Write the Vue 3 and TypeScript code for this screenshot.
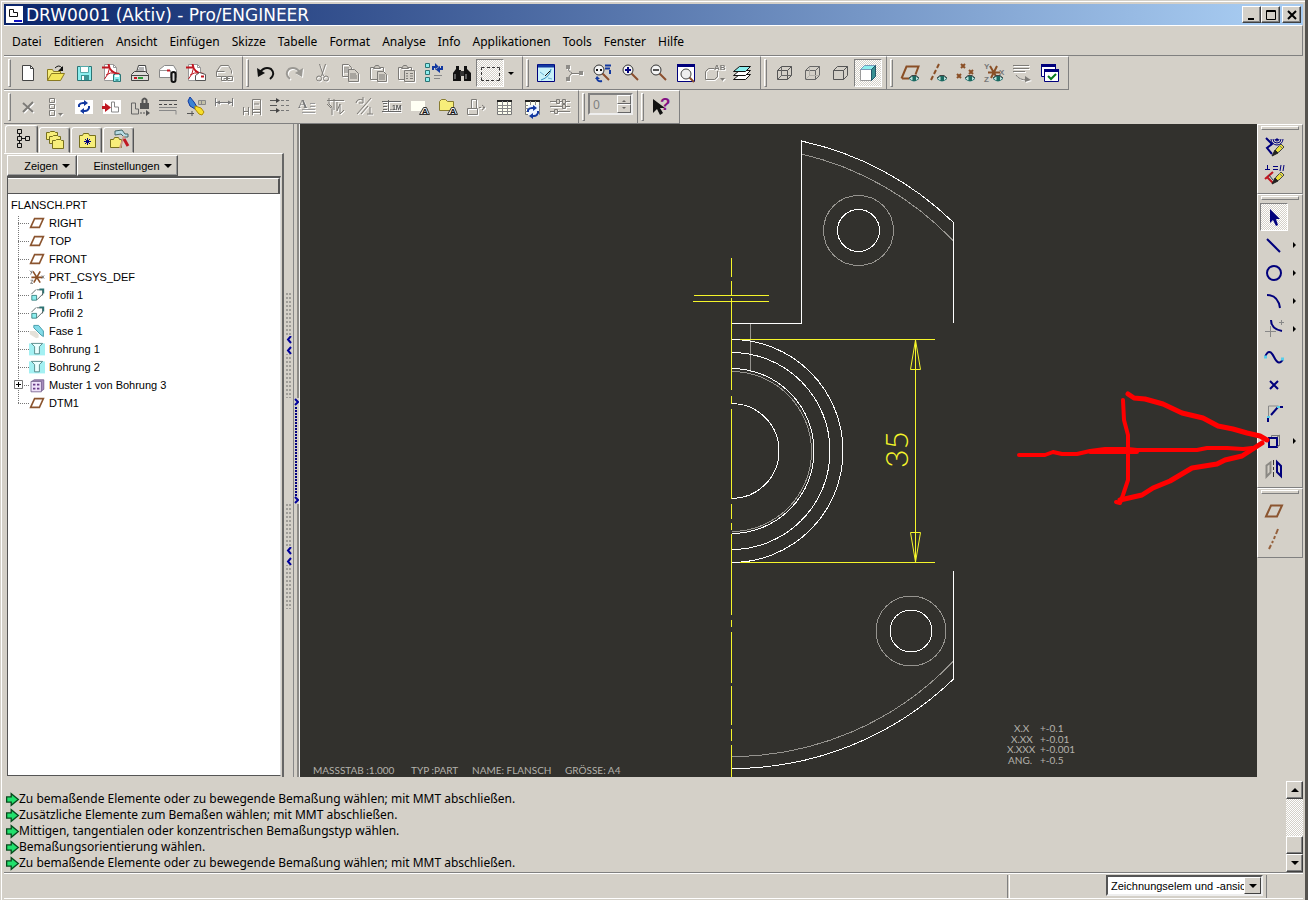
<script setup lang="ts">
import { h, ref } from 'vue'

type Path = [d: string, stroke?: string, fill?: string, width?: number]
type Label = { t: string; x: number; y: number; s: number; c: string; serif?: boolean }
type Shape = Path | Label

const K = '#111'
const G = '#7d7b77'
const W = '#fff'
const N = '#00007c'
const B = '#1238a0'
const R = '#c01822'
const Y = '#f7ee7a'
const C = '#8ceeee'
const T = '#2c7474'
const O = '#8a4f26'

const eye: Shape[] = [
  ['M9 15.5q5-5 10 0q-5 5-10 0z', T, '#bfe3dc'],
  ['M12.5 13h3.5v5h-3.5z', undefined, '#1b6a60'],
  ['M9 15l3-2.5h4l3 2.5', '#444'],
]
const disk: Shape[] = [
  ['M11.5 11.5h7v7h-7z', T, C],
  ['M13 11.5h4v2.5h-4z', undefined, W],
  ['M13.5 16h3v2.5h-3z', undefined, '#4a9c9c'],
]
const pdf: Shape[] = [
  ['M2.5 1.5h9l3 3v13h-12z', '#999', W],
  ['M11.5 1.5v3h3', '#999'],
  ['M0 4.5h7M6.5 1q1 9 11 10', R, 'none', 2],
  ['M7.5 5q-1 7-5 11M4 12q4-3 10-2', R],
]
const envelope: Shape[] = [
  ['M9.5 12.5l4-3 6 2v6h-10z', '#555', W],
  ['M15 13.5h3', R, 'none', 2],
]
const cubeBack = 'M3.5 7.5h10v9h-10zM3.5 7.5l4-4h10v9l-4 4M13.5 7.5l4-4'
const pencil: Shape[] = [
  ['M10 17l2-5 5-5 3 3-5 5z', '#444', '#e8df3a'],
  ['M8 19l3-6 3 3z', '#222', '#222'],
  ['M15 8l3 3', '#777'],
]
const cycle = (x: number, y: number): Shape[] => [
  [`M${x} ${y + 4}v-2q1-2 4-2h2M${x + 10} ${y + 3}v2q-1 3-4 3h-2`, B, 'none', 2],
  [`M${x + 5} ${y - 3}l4 3-4 3zM${x + 5} ${y + 5}l-4 3 4 3z`, undefined, B],
]
const magnifier = (cx: number, cy: number): Shape[] => [
  [`M${cx + 3} ${cy + 3}l7 7`, '#8b4f2e', 'none', 2],
  [`M${cx - 5} ${cy}a5 5 0 1 0 10 0a5 5 0 1 0-10 0`, '#333', '#f4f4f4'],
]
const grid: Shape[] = [
  ['M3.5 3.5h14v14h-14z', '#777', '#fffff0'],
  ['M3 4h15', '#222', 'none', 2],
  ['M3 8.5h15M3 11.5h15M3 14.5h15M8.5 4v14M13.5 4v14', '#888'],
]
const clipboard: Shape[] = [
  ['M2.5 4.5h13v12h-13z', G],
  ['M5.5 5.5l2-3h3l2 3z', G, '#c9c5bd'],
]

const icons: Record<string, Shape[]> = {
  new: [['M4.5 2.5h8l3 3v12h-11z', '#444', W], ['M12.5 2.5v3h3', '#444']],
  open: [
    ['M1.5 17.5v-11h5l1 2h7v3', '#8a7a20', Y],
    ['M1.5 17.5l4-7h13l-4 7z', '#8a7a20', '#f4e65a'],
    ['M9 5q4-4 7 0', K],
    ['M17 3v5h-5z', undefined, K],
  ],
  save: [
    ['M3.5 3.5h14v14h-14z', T, C],
    ['M6.5 3.5h8v6h-8z', '#5aa', W],
    ['M7 12h8v5h-8z', undefined, '#3d9494'],
    ['M8 13h2v4h-2z', undefined, W],
  ],
  pdfsave: [...pdf, ...disk],
  print: [
    ['M6.5 9.5l2-7h7l1 7z', '#444', W],
    ['M9 5h5M8 7h6', '#666'],
    ['M1.5 11.5l3-3h11l3 3v6h-17z', '#444', '#dcdcd8'],
    ['M2 12.5h16', '#444'],
    ['M4 15h3', R, 'none', 2],
    ['M8 15h5', '#2a9a3a', 'none', 2],
  ],
  mail: [
    ['M1.5 6.5l5-4h9l3 5v7h-17z', '#888', W],
    ['M1.5 7.5h11v7', '#999'],
    ['M9 7.5h3', R, 'none', 2],
    ['M13.5 17v-6a2 2 0 0 1 4 0v6a2 2 0 0 1-4 0z', K, '#ddd', 2],
  ],
  pdfmail: [...pdf, ...envelope],
  link: [
    ['M2.5 8.5l4-6h8l3 5v3M2.5 8.5v5h5M2.5 8.5h8', G],
    ['M7.5 13.5h5v4h-5zM13.5 13.5h5v4h-5zM10 15.5h6', G],
  ],
  undo: [['M4 9q5-6 11-3q5 5-1 10', K, 'none', 2], ['M1 5l1 9 7-4z', undefined, K]],
  redo: [['M16 9q-5-6-11-3q-5 5 1 10', '#9a9893', 'none', 2], ['M19 5l-1 9-7-4z', undefined, '#9a9893']],
  cut: [
    ['M7.5 1l4 12M13.5 1l-4 12', G],
    ['M4.5 15.5a2.5 2.5 0 1 0 5 0a2.5 2.5 0 1 0-5 0M11.5 15.5a2.5 2.5 0 1 0 5 0a2.5 2.5 0 1 0-5 0', G],
  ],
  copy: [
    ['M2.5 1.5h6l3 3v9h-9zM4 5h5M4 7h5M4 9h5', G],
    ['M8.5 6.5h6l4 4v8h-10z', G, '#d4d0c8'],
    ['M10 11h6M10 13h7M10 15h7', G],
  ],
  paste: [...clipboard, ['M9.5 8.5h6l3 3v7h-9z', G, '#d4d0c8'], ['M11 12h6M11 14h6M11 16h6', G]],
  pastespecial: [...clipboard, ['M8.5 7.5h10v11h-10z', G, '#d4d0c8'], ['M10 10.5h2M14 10.5h3M10 13h2M14 13h3M10 15.5h2M14 15.5h3', G]],
  regen: [
    ['M1.5.5h4v4h-4zM1.5 7.5h4v4h-4zM1.5 14.5h4v4h-4z', T, C],
    ['M9 7v-3h2M18 3v3h-2', B, 'none', 2],
    ['M11 0l4 4-4 3zM16 3l-5 3 5 4z', undefined, B],
    ['M10 12.5h8M10 15.5h6', '#888'],
  ],
  find: [
    ['M4 3h3v4h2v11h-8v-8l3-4zM12 3h3v3l4 4v8h-7v-11z', undefined, K],
    ['M8 8h4v5h-4z', undefined, '#333'],
    ['M3 11v5M14 11v5', '#aaa'],
  ],
  select: [['M1.5 7v-2.5h3M7 4.5h3M12 4.5h3M17 4.5h2.5v3M19.5 10v3M19.5 15v2.5h-3M14 17.5h-3M9 17.5h-3M4 17.5h-2.5v-3M1.5 12v-3', '#333']],
  repaint: [
    ['M1.5 1.5h17v17h-17z', N, '#c8f2fa'],
    ['M2 3h16', B, 'none', 3],
    ['M5 17q9-3 10-11', '#3b8dbb'],
    ['M4 9l4 3M12 15l4 1', '#6cb0d0'],
    ['M9 13l5-5', K],
  ],
  spin: [
    ['M4 4q0 5 4 6q-3 2-4 7M8 10.5h9', G],
    ['M2 2h4v4h-4zM2 14h4v4h-4zM15 8h4v4h-4z', undefined, '#8e8c88'],
  ],
  orient: [
    ...magnifier(7, 7),
    ['M13 2.5h6M13 5.5h5M18 7v4M5 15q0 4 5 3', B, 'none', 2],
    ['M4 7h2M8 7h2', K, 'none', 2],
    ['M3 16l2-3 3 3z', undefined, B],
  ],
  zoomin: [...magnifier(8, 7), ['M5 7h6M8 4v6', N, 'none', 2]],
  zoomout: [...magnifier(8, 7), ['M5 7h6', '#555', 'none', 2]],
  refit: [
    ['M1.5 1.5h17v17h-17z', N, W],
    ['M1 2.5h18', N, 'none', 3],
    ['M13 14l5 5', '#8b4f2e', 'none', 2],
    ['M5 11a5 5 0 1 0 10 0a5 5 0 1 0-10 0', '#444', '#eee'],
  ],
  views: [
    ['M1.5 16.5v-8l3-3h6M1.5 16.5h9l3-3v-5', G],
    { t: 'AB', x: 10, y: 7, s: 8, c: '#7d7b77' },
    ['M13.5 8v6', G],
    ['M16 15h5l-2.5 3z', undefined, G],
  ],
  layers: [
    ['M1.5 16.5l6-5h11l-5 5z', K, W],
    ['M1.5 12.5l6-5h11l-5 5z', K, W],
    ['M1.5 8.5l6-5h11l-5 5z', K, C],
  ],
  wire: [[cubeBack, '#555'], ['M3.5 16.5l4-4h10M7.5 4v9', '#666']],
  hidden: [[cubeBack, '#666'], ['M3.5 16.5l4-4h10M7.5 4v9', '#b1aea8']],
  nohidden: [[cubeBack, '#555']],
  shaded: [
    ['M2.5 6.5h11v11h-11z', '#999', W],
    ['M2.5 6.5l4-4h11l-4 4z', '#79b', C],
    ['M13.5 6.5l4-4v11l-4 4z', '#256', '#378f91'],
  ],
  planes: [['M1.5 15.5l5-12h12l-3 8M2 15.5h7', O, 'none', 2], ...eye],
  axes: [['M11 1l-2 4M8 7l-2 4M5 13l-2 4', O, 'none', 2], ...eye],
  points: [
    ['M5 1l4 4M9 1l-4 4M13 7l4 4M17 7l-4 4M1 11l4 4M5 11l-4 4', O, 'none', 2],
    ...eye,
  ],
  csys: [
    ['M6 3l7 12M13 3l-6 12M4 9.5h12', O, 'none', 2],
    { t: 'Y', x: 0, y: 6, s: 8, c: '#777' },
    { t: 'Z', x: 0, y: 19, s: 8, c: '#777' },
    { t: 'X', x: 15, y: 12, s: 8, c: '#777' },
    ...eye,
  ],
  notes: [['M1 2.5h16M1 5.5h16M1 8.5h12', G], ['M4 12q3 5 11 5', G], ['M13 13l6 4-6 2z', undefined, G]],
  windows: [
    ['M1.5 1.5h14v12h-14z', N, W],
    ['M1 2.5h15', N, 'none', 3],
    ['M4.5 7.5h14v11h-14z', N, W],
    ['M4 7.5h15', N, 'none', 3],
    ['M8 13l3 3 5-5', '#087a20', 'none', 2],
  ],
  close: [['M5 6l10 9M15 5l-10 10', G, 'none', 2]],
  chain: [['M3.5 1.5h5v4h-5zM3.5 7.5h5v4h-5zM3.5 13.5h5v5h-5z', G], ['M12 16h5l-2.5 3z', undefined, G]],
  update: [['M1 3h18v14h-18z', undefined, W], ...cycle(5, 6)],
  insert: [['M1 3h18v14h-18z', undefined, W], ['M9.5 5v10h7v-5h-4v-5z', '#888'], ['M0 10.5h4', R, 'none', 3], ['M3 6l6 4.5-6 4.5z', undefined, R]],
  lock: [
    ['M1.5 6v11h7v-5h-3v-6z', '#666'],
    ['M10 6h9v6h-9z', undefined, '#555'],
    ['M12.5 6v-3q2-3 4 0v3', '#555', 'none', 2],
    ['M10 16h2M13 16h2', '#555'],
    ['M16 13l4 3-4 3z', undefined, '#555'],
  ],
  lines: [['M1 3.5h18', '#555'], ['M1 7.5h3M6 7.5h3M11 7.5h3M16 7.5h3', '#444'], ['M1 10.5h18M1 13.5h9', '#888'], ['M10 13.5h8v4', '#888']],
  highlight: [
    ['M12.5 3.5h7v4h-7zM15.5 4v3', '#888', '#c4c1a8'],
    ['M4 0l-2 4 2 5 5 3 2-2-3-5z', B, '#3b83d2'],
    ['M9 9l6 2 3 4-2 3-3-1-4-5z', '#b08b00', '#f7df2c'],
    ['M1 16.5h7M6 14v5', '#555'],
  ],
  dim: [['M1.5 1v8M18.5 1v8M2 5.5h16', '#777'], ['M2 5.5l4-2v4zM18 5.5l-4-2v4z', undefined, '#777']],
  ordinate: [['M1.5 10v8M1 14.5h6M6.5 10v8M10.5 2.5h8v10h-8zM10.5 12v6M18.5 12v6M10 15.5h9M12 7h5', G]],
  align: [['M0 3.5h7M0 8.5h7M0 13.5h7', '#555'], ['M6 1l4 2.5-4 2.5zM6 11l4 2.5-4 2.5z', undefined, '#444'], ['M11 3.5h3M16 3.5h3M11 8.5h3M16 8.5h3M11 13.5h3M16 13.5h3', '#777']],
  note: [{ t: 'A', x: 0, y: 11, s: 13, c: '#777', serif: true }, ['M12 6.5h5M12 9.5h5M4 12.5h13M4 15.5h13', '#999']],
  symbol: [['M1 3.5h17M3 1v6l3 3v8M8 2v11M11 5v9l3-7v10l4-4M1 7l4 4', G]],
  surface: [['M2 6q1-5 7-3M9 0v6h-4M17 1l-14 16M14 9l-7 8M13 17h6M16 10v7', G]],
  gtol: [['M1 6.5h4M1 9.5h4M1 12.5h4M6.5 3v12M0 4.5h19M0 14.5h19', '#666'], { t: '.1M', x: 8, y: 13, s: 7, c: '#555' }],
  draftnote: [['M1 4h14v10h-14z', undefined, '#fffff4'], ['M9.5 17.5l4-7h3l3 7z', '#333', '#eee'], { t: 'A', x: 12, y: 17, s: 8, c: '#111' }],
  foldernote: [['M1.5 4.5l2-2h4l2 2h6v9h-14z', '#887c30', Y], ['M9.5 17.5l4-7h3l3 7z', '#333', '#eee'], { t: 'A', x: 12, y: 17, s: 8, c: '#111' }],
  section: [['M1.5 11.5h10v6h-10zM5.5 2.5h5v9h-5zM13 10.5h2M17 10.5h2M16 8l3 2.5-3 2.5', G]],
  table: grid,
  tableupdate: [...grid, ['M6 8h11v10h-11z', undefined, '#eef5ff'], ...cycle(6, 11)],
  balloons: [['M0 4.5h20M0 9.5h20M0 14.5h20', G], ['M6.5 2.5h3v4h-3zM12.5 7.5h3v4h-3zM4.5 12.5h3v4h-3zM12.5 2.5h3v4h-3z', G, '#d4d0c8']],
  help: [['M2 2v14l4-4 3 6 3-2-3-5h5z', undefined, K], { t: '?', x: 9, y: 13, s: 17, c: '#831083' }],
  sketchprefs: [
    ['M2 1l6 6-5 4 5 6', N, 'none', 2],
    ['M7 2a6 6 0 0 0 12 0M9 2a4 4 0 0 0 8 0M11 2a2 2 0 0 0 4 0', N],
    ['M13 1v3M11.5 2.5h3', N],
    ...pencil,
  ],
  constraints: [
    ['M1 4.5h5M3.5 0v5M9 1.5h5M9 4.5h5M17 0l-1 6M20 0l-1 6', N],
    ['M1 14l8-7M3 12l6 6', R, 'none', 2],
    ['M5 10l4 5', '#245'],
    ...pencil,
  ],
  pointer: [['M6 2v14l3-3 3 6 2-1-2-6h4z', undefined, N]],
  line: [['M3 4l13 13', N, 'none', 2]],
  circle: [['M3 10a7 7 0 1 0 14 0a7 7 0 1 0-14 0', N, 'none', 2]],
  arc: [['M3 4q11 0 13 13', N, 'none', 2]],
  fillet: [['M7 1q0 9 11 11', N, 'none', 2], ['M1 12.5h11M6.5 7v11M15 3.5h5M17.5 1v5', '#888']],
  spline: [['M1 10q4-10 9 0t9 2', N, 'none', 2], ['M0 10h3M17 12h3', '#58cdea', 'none', 3]],
  point: [['M6 6l8 8M14 6l-8 8', N, 'none', 2]],
  chamfer: [['M4.5 15v-12h10', '#888'], ['M4 19v-5M7 12l7-8h5', N, 'none', 2], ['M3 14h3M13 4h3', '#58cdea', 'none', 2]],
  edge: [['M7.5 7v-2.5h8v10h-3', '#777'], ['M5 7h8v9h-8z', N, 'none', 2], ['M13 6l3-2M13 16l3-2', '#777']],
  mirror: [['M2.5 6.5l4-3v10l-4 4z', '#8b8984', 'none', 2], ['M9.5 1v5M9.5 8v3M9.5 13v5', '#333'], ['M13 3l4 4v10l-4-4z', N, 'none', 2]],
  plane: [['M2 15.5l5-11h11l-5 11z', '#8b5530', 'none', 2]],
  axis: [['M14 0l-2 5M11 7l-1 3M9 12l-1 2M7 16l-2 4', '#95603c', 'none', 2]],
  treetab: [['M5.5.5h4v4h-4zM5.5 7.5h4v4h-4zM5.5 14.5h4v4h-4zM13.5 7.5h4v4h-4zM7.5 5v2M10 9.5h3M7.5 12v2', K]],
  folders: [
    ['M1.5 9.5v-7h3l1-1h4l1 1h2v7z', '#77701c', Y],
    ['M4.5 13.5v-7h3l1-1h4l1 1h2v7z', '#77701c', Y],
    ['M7.5 18.5v-8h3l1-1h4l1 1h2v8z', '#77701c', Y],
  ],
  favorites: [['M2.5 17.5v-12h3l1-2h5l1 2h6v12z', '#77701c', Y], ['M10.5 8v7M7 11.5h7M8 9l5 5M13 9l-5 5', N]],
  connections: [
    ['M1.5 17.5v-8h3l1-2h4l1 2h2v8z', '#77701c', Y],
    ['M6 1l7-1 3 4h3v3h-4l-3-3-6 1z', '#466', '#b7dbe4'],
    ['M15 6l-4 12', '#c98', 'none', 2],
    ['M15 9l4 7', R, 'none', 3],
  ],
  csysnode: [['M5 3l9 14M14 3l-8 14M3 10.5h14', O, 'none', 2], ['M1 2l3 3M4 2l-2 5M16 8l3 4M19 8l-3 4M2 14h3l-3 4h3', '#666']],
  extrude: [['M3.5 10.5h6v6h-6z', T, C], ['M3 9l6-6M10 16l7-7', '#344'], ['M10 3.5h7v7', '#344'], ['M13 3h5v5', T, 'none', 2]],
  chamfernode: [['M1 10h7l4 4v4l-3 1-8-5z', undefined, '#e4e1d9'], ['M6 3h6l6 7v7l-3-2-9-9z', '#2c8c9c', '#84dbe8']],
  hole: [['M0 3h20v15h-20z', undefined, '#a3f0f2'], ['M3 3l4 4v9h6v-9l4-4z', '#477', '#ecffff']],
  pattern: [['M3.5 5.5l3-2h12v12l-3 2z', '#6d5986', '#a78cbc'], ['M2.5 5.5h13v13h-13z', '#6d5986', '#efe2fa'], ['M5 9.5h3M10 9.5h3M5 14.5h3M10 14.5h3', '#6a3c88', 'none', 2]],
  arrow: [['M1 6h7v-5l11 9-11 9v-5h-7z', '#064a1c', '#22e06c', 2]],
}

const Icon = (props: { name: string }) =>
  h(
    'svg',
    { viewBox: '0 0 20 20', width: 20, height: 20, class: 'icon', 'aria-hidden': 'true' },
    (icons[props.name] ?? []).map((s) =>
      Array.isArray(s)
        ? h('path', { d: s[0], stroke: s[1] ?? 'none', fill: s[2] ?? 'none', 'stroke-width': s[3] ?? 1 })
        : h('text', { x: s.x, y: s.y, fill: s.c, 'font-size': s.s, 'font-weight': 'bold', 'font-family': s.serif ? 'Liberation Serif, serif' : 'Liberation Sans, sans-serif' }, s.t),
    ),
  )
Icon.props = ['name']

interface Tool { icon: string; label: string; disabled?: boolean; pressed?: boolean; more?: boolean }
const t = (icon: string, label: string, flags = ''): Tool => ({
  icon,
  label,
  disabled: flags.includes('d'),
  pressed: flags.includes('p'),
  more: flags.includes('m'),
})

const menus = ['Datei', 'Editieren', 'Ansicht', 'Einfügen', 'Skizze', 'Tabelle', 'Format', 'Analyse', 'Info', 'Applikationen', 'Tools', 'Fenster', 'Hilfe']

const topBar: Tool[][] = [
  [t('new', 'Neu'), t('open', 'Öffnen'), t('save', 'Speichern'), t('pdfsave', 'PDF speichern'), t('print', 'Drucken'), t('mail', 'Senden'), t('pdfmail', 'PDF senden'), t('link', 'Verknüpfung senden', 'd')],
  [t('undo', 'Rückgängig'), t('redo', 'Wiederherstellen', 'd'), t('cut', 'Ausschneiden', 'd'), t('copy', 'Kopieren', 'd'), t('paste', 'Einfügen', 'd'), t('pastespecial', 'Inhalte einfügen', 'd'), t('regen', 'Regenerieren'), t('find', 'Suchen'), t('select', 'Auswahl', 'pm')],
  [t('repaint', 'Neuzeichnen'), t('spin', 'Drehzentrum', 'd'), t('orient', 'Orientieren'), t('zoomin', 'Vergrößern'), t('zoomout', 'Verkleinern'), t('refit', 'Einpassen'), t('views', 'Ansichten', 'd'), t('layers', 'Layer')],
  [t('wire', 'Drahtmodell'), t('hidden', 'Verdeckte Kanten'), t('nohidden', 'Sichtbare Kanten'), t('shaded', 'Schattiert', 'p')],
  [t('planes', 'Bezugsebenen'), t('axes', 'Bezugsachsen'), t('points', 'Bezugspunkte'), t('csys', 'Koordinatensysteme'), t('notes', 'Anmerkungen', 'd'), t('windows', 'Fenster aktivieren')],
]

const draftBar: Tool[] = [
  t('close', 'Schließen', 'd'), t('chain', 'Kette', 'd'), t('update', 'Aktualisieren'), t('insert', 'Ansicht einfügen'), t('lock', 'Ansicht sperren'),
  t('lines', 'Linien'), t('highlight', 'Hervorheben'), t('dim', 'Bemaßung', 'd'), t('ordinate', 'Ordinate', 'd'), t('align', 'Ausrichten'),
  t('note', 'Notiz', 'd'), t('symbol', 'Symbol', 'd'), t('surface', 'Oberfläche', 'd'), t('gtol', 'Toleranz', 'd'), t('draftnote', 'Zeichnungsnotiz'),
  t('foldernote', 'Notiz aus Datei'), t('section', 'Schnitt', 'd'), t('table', 'Tabelle'), t('tableupdate', 'Tabelle aktualisieren'), t('balloons', 'Stücklistenballons', 'd'),
]

const sideBar: Tool[][] = [
  [t('sketchprefs', 'Skizziervorgaben'), t('constraints', 'Bedingungen')],
  [t('pointer', 'Auswählen', 'p'), t('line', 'Linie', 'm'), t('circle', 'Kreis', 'm'), t('arc', 'Bogen', 'm'), t('fillet', 'Rundung', 'm'), t('spline', 'Spline'), t('point', 'Punkt'), t('chamfer', 'Fase'), t('edge', 'Kante verwenden', 'm'), t('mirror', 'Spiegeln')],
  [t('plane', 'Ebene'), t('axis', 'Achse')],
]

const tabs = [t('treetab', 'Modellbaum', 'p'), t('folders', 'Ordner'), t('favorites', 'Favoriten'), t('connections', 'Verbindungen')]

const nodes = [
  { icon: 'plane', name: 'RIGHT' },
  { icon: 'plane', name: 'TOP' },
  { icon: 'plane', name: 'FRONT' },
  { icon: 'csysnode', name: 'PRT_CSYS_DEF' },
  { icon: 'extrude', name: 'Profil 1' },
  { icon: 'extrude', name: 'Profil 2' },
  { icon: 'chamfernode', name: 'Fase 1' },
  { icon: 'hole', name: 'Bohrung 1' },
  { icon: 'hole', name: 'Bohrung 2' },
  { icon: 'pattern', name: 'Muster 1 von Bohrung 3', branch: true },
  { icon: 'plane', name: 'DTM1' },
]

const messages = [
  'Zu bemaßende Elemente oder zu bewegende Bemaßung wählen; mit MMT abschließen.',
  'Zusätzliche Elemente zum Bemaßen wählen; mit MMT abschließen.',
  'Mittigen, tangentialen oder konzentrischen Bemaßungstyp wählen.',
  'Bemaßungsorientierung wählen.',
  'Zu bemaßende Elemente oder zu bewegende Bemaßung wählen; mit MMT abschließen.',
]

const tolerances = [
  { label: 'X.X', x: 1014, value: '+-0.1', y: 732 },
  { label: 'X.XX', x: 1011, value: '+-0.01', y: 743 },
  { label: 'X.XXX', x: 1007, value: '+-0.001', y: 753 },
  { label: 'ANG.', x: 1008, value: '+-0.5', y: 764 },
]

// Start and end of each dash of the vertical centre line.
const centreDashes = [
  [258, 277], [281, 295], [298, 390], [396, 404], [409, 499], [504, 519], [523, 530],
  [534, 615], [620, 627], [632, 683], [686, 725], [729, 741], [745, 777],
]

const count = ref(0)
const filter = ref('Zeichnungselem und -ansic')
</script>

<template>
  <div class="window">
    <header class="titlebar">
      <svg class="logo" viewBox="0 0 17 17" width="17" height="17" aria-hidden="true">
        <path d="M0 0h17v17h-17z" fill="#fff" />
        <path d="M3.5 3.5v7h8v-4h-4v-3z" fill="none" stroke="#111" />
        <path d="M8 15h8" stroke="#1010c0" stroke-width="2" />
      </svg>
      <h1>DRW0001 (Aktiv) - Pro/ENGINEER</h1>
      <div class="caption">
        <button aria-label="Minimieren"><svg viewBox="0 0 12 12" width="12" height="12"><path d="M2 10h6" stroke="#000" stroke-width="2" /></svg></button>
        <button aria-label="Maximieren"><svg viewBox="0 0 12 12" width="12" height="12"><path d="M1.5 1.5h9v9h-9zM1 2.5h10" fill="none" stroke="#000" /></svg></button>
        <button class="quit" aria-label="Schließen"><svg viewBox="0 0 12 12" width="12" height="12"><path d="M2 2l8 8M10 2l-8 8" stroke="#000" stroke-width="2" /></svg></button>
      </div>
    </header>

    <nav class="menubar">
      <button v-for="m in menus" :key="m">{{ m }}</button>
    </nav>

    <div class="toolbar">
      <div v-for="(group, i) in topBar" :key="i" class="group">
        <span class="grip"></span>
        <template v-for="b in group" :key="b.icon">
          <button class="tool" :class="{ disabled: b.disabled, pressed: b.pressed }" :aria-label="b.label"><Icon :name="b.icon" /></button>
          <button v-if="b.more" class="drop" aria-label="Weitere Auswahl"><span class="down"></span></button>
        </template>
      </div>
    </div>

    <div class="toolbar">
      <div class="group">
        <span class="grip"></span>
        <button v-for="b in draftBar" :key="b.icon" class="tool" :class="{ disabled: b.disabled }" :aria-label="b.label"><Icon :name="b.icon" /></button>
      </div>
      <div class="group">
        <span class="grip"></span>
        <div class="spinner">
          <input v-model="count" type="text" aria-label="Anzahl" disabled />
          <div class="steps">
            <button aria-label="Erhöhen"><span class="up"></span></button>
            <button aria-label="Verringern"><span class="down"></span></button>
          </div>
        </div>
      </div>
      <div class="group">
        <span class="grip"></span>
        <button class="tool" aria-label="Kontexthilfe"><Icon name="help" /></button>
      </div>
    </div>

    <main class="work">
      <aside class="navigator">
        <div class="tabs">
          <button v-for="b in tabs" :key="b.icon" :class="{ current: b.pressed }" :aria-label="b.label"><Icon :name="b.icon" /></button>
        </div>
        <div class="pane">
          <div class="actions">
            <button class="show">Zeigen <span class="down big"></span></button>
            <button class="settings">Einstellungen <span class="down big"></span></button>
          </div>
          <div class="tree">
            <div class="treehead"></div>
            <p class="root">FLANSCH.PRT</p>
            <ul>
              <li v-for="n in nodes" :key="n.name">
                <button v-if="n.branch" class="expand" aria-label="Aufklappen"><svg viewBox="0 0 9 9" width="9" height="9"><path d="M.5.5h8v8h-8z" fill="#fff" stroke="#777" /><path d="M2 4.5h5M4.5 2v5" stroke="#000" /></svg></button>
                <Icon :name="n.icon" class="small" />
                <span>{{ n.name }}</span>
              </li>
            </ul>
          </div>
        </div>
      </aside>

      <div class="splitter">
        <div class="rail">
          <template v-for="k in 2" :key="k">
            <div class="knob"><svg viewBox="0 0 6 18" width="6" height="18" aria-hidden="true"><path d="M0 0h6v18h-6z" fill="#d4d0c8" /><path d="M5 0l-3 3.5 3 3.5M5 11l-3 3.5 3 3.5" fill="none" stroke="#00009c" stroke-width="2" /></svg></div>
          </template>
        </div>
        <div class="edge">
          <div class="slot">
            <svg viewBox="0 0 5 8" width="5" height="8" aria-hidden="true"><path d="M0 0h5v8h-5z" fill="#d4d0c8" /><path d="M1 1l3 3-3 3" fill="none" stroke="#00009c" stroke-width="2" /></svg>
            <svg viewBox="0 0 5 8" width="5" height="8" aria-hidden="true"><path d="M0 0h5v8h-5z" fill="#d4d0c8" /><path d="M1 1l3 3-3 3" fill="none" stroke="#00009c" stroke-width="2" /></svg>
          </div>
        </div>
      </div>

      <section class="canvas" aria-label="Zeichnung">
        <svg viewBox="300 124 957 653" preserveAspectRatio="xMidYMax meet">
          <g fill="none" stroke="#96948f" shape-rendering="crispEdges">
            <path d="M801.5 154A305 305 0 0 1 953.5 241M953.5 661A305 305 0 0 1 731.5 756.5M750.5 323v49" />
            <path d="M731.5 371.5a80 80 0 0 1 0 160" />
            <circle cx="858.5" cy="230.5" r="35" />
            <circle cx="911" cy="631" r="35" />
          </g>
          <g fill="none" stroke="#fff" shape-rendering="crispEdges">
            <path d="M731 323.5h70.5V141A318 318 0 0 1 953.5 222.5V323M953.5 571v108A318 318 0 0 1 731.5 768.5" />
            <path d="M731.5 339.5a111 111 0 0 1 0 223M731.5 352.5a98 98 0 0 1 0 197M731.5 368.5a82 82 0 0 1 0 165M731.5 403.5a47 47 0 0 1 0 95" />
            <circle cx="858.5" cy="230.5" r="21" />
            <circle cx="911" cy="631" r="21" />
          </g>
          <g fill="#f5f52a">
            <rect v-for="d in centreDashes" :key="d[0]" x="731" :y="d[0]" width="1" :height="d[1] - d[0]" />
            <rect x="694" y="295" width="75" height="1" />
            <rect x="693" y="301" width="76" height="1" />
            <rect x="740" y="339" width="195" height="1" />
            <rect x="740" y="562" width="195" height="1" />
            <rect x="915" y="340" width="1" height="222" />
          </g>
          <path d="M915.5 340l-5 29.5h10zM915.5 562l-5-29.5h10z" fill="none" stroke="#f5f52a" />
          <text class="measure" transform="translate(908 468) rotate(-90)">35</text>
          <g class="plot">
            <text x="313" y="774">MASSSTAB :1.000</text>
            <text x="411" y="774">TYP :PART</text>
            <text x="472" y="774">NAME: FLANSCH</text>
            <text x="565" y="774">GRÖSSE: A4</text>
            <template v-for="r in tolerances" :key="r.label">
              <text :x="r.x" :y="r.y">{{ r.label }}</text>
              <text x="1040" :y="r.y">{{ r.value }}</text>
            </template>
          </g>
        </svg>
      </section>

      <div class="sidebar">
        <div v-for="(group, i) in sideBar" :key="i" class="sidegroup">
          <span class="hgrip"></span>
          <div v-for="b in group" :key="b.icon" class="siderow">
            <button class="tool" :class="{ pressed: b.pressed }" :aria-label="b.label"><Icon :name="b.icon" /></button>
            <button v-if="b.more" class="flyout" aria-label="Weitere Werkzeuge"><span class="right"></span></button>
          </div>
        </div>
      </div>

      <svg class="pointerline" viewBox="1011 388 292 120" width="292" height="120" aria-hidden="true">
        <g fill="none" stroke="#f00" stroke-linecap="round" stroke-linejoin="round">
          <path stroke-width="4" d="M1019 455H1045L1053 452L1062 454H1077L1090 451L1105 449H1128L1137 450H1197L1207 448H1227L1243 449L1252 448M1090 452H1137" />
          <path stroke-width="5" d="M1128 394L1134 398L1145 399L1163 404L1182 413L1203 418L1218 426L1233 429L1247 433L1260 436L1267 440" />
          <path stroke-width="4" d="M1123 400L1124 420L1128 435V480L1123 495L1120 503L1116 502" />
          <path stroke-width="5" d="M1120 500L1142 495L1153 488L1170 481L1192 468L1217 464L1225 460L1242 456L1262 443" />
        </g>
      </svg>
    </main>

    <section class="log">
      <ul>
        <li v-for="(m, i) in messages" :key="i"><Icon name="arrow" class="bullet" /><span>{{ m }}</span></li>
      </ul>
      <div class="scroll">
        <button aria-label="Nach oben"><span class="up big"></span></button>
        <div class="track"></div>
        <div class="thumb"></div>
        <button aria-label="Nach unten"><span class="down big"></span></button>
      </div>
    </section>

    <footer class="status">
      <div class="hint"></div>
      <div class="filter">
        <select v-model="filter" aria-label="Auswahlfilter"><option>Zeichnungselem und -ansic</option></select>
        <span class="selarrow"><span class="down big"></span></span>
      </div>
      <div class="corner"></div>
    </footer>
  </div>
</template>

<style>
body { margin: 0; background: #d4d0c8; }
</style>

<style scoped>
* { box-sizing: border-box; }
.window {
  height: 100vh;
  min-height: 600px;
  display: flex;
  flex-direction: column;
  padding: 4px 2px 1px 4px;
  background: #d4d0c8;
  border-right: 3px solid #55534f;
  box-shadow: inset 1px 1px 0 #d4d0c8, inset 2px 2px 0 #fff;
  color: #000;
  font: 12px/16px "Noto Sans", sans-serif;
  overflow: hidden;
}
button { padding: 0; margin: 0; border: 0; background: none; color: inherit; font: inherit; display: flex; align-items: center; justify-content: center; }
ul { list-style: none; margin: 0; padding: 0; }
.icon { display: block; overflow: visible; flex: none; }

.titlebar { flex: none; height: 21px; display: flex; align-items: center; padding: 0 2px; background: linear-gradient(90deg, #0a246a, #a6caf0 96%); }
.logo { margin-right: 3px; }
.titlebar h1 { flex: 1; margin: 0; padding-top: 1px; color: #fff; font: 17px/20px "DejaVu Sans", sans-serif; white-space: nowrap; }
.caption { display: flex; }
.caption button { width: 19px; height: 17px; background: #d4d0c8; border: 1px solid; border-color: #fff #404040 #404040 #fff; box-shadow: inset -1px -1px 0 #808080; }
.caption .quit { margin-left: 2px; }

.menubar { flex: none; display: flex; gap: 12px; height: 31px; padding: 3px 8px 0; border-top: 1px solid #fff; border-right: 1px solid #808080; border-bottom: 1px solid #808080; }

.toolbar { flex: none; display: flex; height: 34px; }
.group { display: flex; align-items: center; padding: 0 4px 0 3px; border-top: 1px solid #fff; border-right: 1px solid #808080; border-bottom: 1px solid #808080; }
.group:first-child { padding-left: 4px; }
.grip { width: 3px; height: 28px; margin-right: 3px; border: 1px solid; border-color: #fff #808080 #808080 #fff; }
.tool { flex: none; width: 28px; height: 28px; }
.disabled .icon { filter: drop-shadow(1px 1px 0 #fff); }
.pressed { border: 1px solid; border-color: #808080 #fff #fff #808080; background: repeating-conic-gradient(#fff 0 25%, #d4d0c8 0 50%) 0 0 / 2px 2px; }
.drop { width: 14px; height: 28px; }
.down, .up, .right { display: inline-block; width: 0; height: 0; border: 3px solid transparent; }
.down { border-top-color: #000; border-bottom-width: 0; }
.up { border-bottom-color: #000; border-top-width: 0; }
.right { border-left-color: #000; border-right-width: 0; }
.big { border-left-width: 4px; border-right-width: 4px; }
.down.big { border-top-width: 4px; }
.up.big { border-bottom-width: 4px; }

.spinner { display: flex; width: 45px; height: 22px; margin-bottom: 6px; border: 2px solid; border-color: #808080 #eee #eee #808080; }
.spinner input { flex: 1; min-width: 0; padding: 0 3px; border: 0; background: #d4d0c8; color: #808080; font: 12px "Noto Sans", sans-serif; }
.steps { width: 14px; display: flex; flex-direction: column; }
.steps button { flex: 1; border: 1px solid; border-color: #fff #666 #666 #fff; }
.steps .up, .steps .down { border-width: 2px; opacity: .5; }

.work { position: relative; flex: 1; min-height: 0; display: flex; }
.navigator { flex: none; width: 280px; display: flex; flex-direction: column; font: 11px/18px "Liberation Sans", Arial, sans-serif; }
.tabs { display: flex; align-items: flex-end; height: 29px; gap: 1px; padding-left: 1px; }
.tabs button { width: 31px; height: 26px; border: 1px solid; border-color: #fff #555 transparent #fff; border-radius: 3px 3px 0 0; box-shadow: inset -1px 0 0 #999; }
.tabs .current { width: 33px; height: 28px; }
.pane { flex: 1; min-height: 0; display: flex; flex-direction: column; border-top: 1px solid #fff; border-right: 2px solid #666; padding: 1px 1px 1px 3px; }
.actions { display: flex; }
.actions button { height: 21px; gap: 4px; border: 1px solid; border-color: #fff #555 #555 #fff; box-shadow: inset -1px -1px 0 #999; }
.show { width: 70px; }
.actions .show { padding-left: 10px; }
.settings { width: 101px; }
.actions .settings { padding-left: 10px; }
.tree { flex: 1; min-height: 0; background: #fff; border: 1px solid; border-color: #555 #ddd #555 #555; border-top-width: 2px; overflow: hidden; }
.treehead { height: 16px; background: #d4d0c8; border-right: 2px solid #555; border-bottom: 1px solid #555; border-top: 1px solid #fff; }
.root { margin: 2px 0 0 3px; }
.tree ul { position: relative; margin-left: 10px; }
.tree ul::before { content: ""; position: absolute; left: 0; top: 2px; bottom: 9px; border-left: 1px dotted #777; }
.tree li { position: relative; display: flex; align-items: center; height: 18px; }
.tree li::before { content: ""; width: 11px; border-top: 1px dotted #777; }
.small { width: 16px; height: 16px; margin-right: 4px; }
.expand { position: absolute; left: -4px; top: 4px; }

.splitter { flex: none; width: 16px; display: flex; border-right: 1px solid #eee; }
.rail { width: 9px; display: flex; flex-direction: column; justify-content: center; align-items: center; gap: 106px; }
.knob { width: 6px; height: 105px; display: flex; align-items: center; justify-content: center; background: radial-gradient(circle at 1px 1px, #a09e99 0 1px, transparent 1px) 0 0 / 3px 4px; }
.edge { width: 6px; display: flex; align-items: center; border-left: 1px solid #888; border-right: 2px solid #8c8a86; }
.slot { width: 5px; height: 106px; display: flex; flex: none; flex-direction: column; justify-content: space-between; background: radial-gradient(circle at 2px 1px, #000080 0 1px, #d4d0c8 1px) 0 0 / 5px 3px; }

.canvas { flex: 1; min-width: 0; background: #32312d; }
.canvas svg { display: block; width: 100%; height: 100%; }
.measure { fill: #f5f52a; font: 300 32px Lato, sans-serif; }
.plot { fill: #b4b2ac; font: 10px Lato, sans-serif; }

.sidebar { flex: none; width: 46px; }
.sidegroup { padding: 0 2px 4px; border-left: 1px solid #fff; border-right: 1px solid #808080; border-bottom: 1px solid #808080; border-top: 1px solid #fff; }
.hgrip { display: block; height: 4px; margin: 1px 1px 3px; border: 1px solid; border-color: #fff #808080 #808080 #fff; }
.siderow { display: flex; }
.flyout { width: 13px; height: 28px; }
.pointerline { position: absolute; right: 0; top: 264px; pointer-events: none; }

.log { flex: none; display: flex; justify-content: space-between; border-bottom: 1px solid #808080; padding: 4px 0 0; font: 12px/16px "Noto Sans", sans-serif; }
.log ul { padding: 10px 0 1px 2px; }
.log li { display: flex; align-items: center; height: 16px; }
.bullet { width: 13px; height: 13px; }
.scroll { width: 17px; height: 91px; display: flex; flex-direction: column; }
.scroll button, .thumb { height: 18px; background: #d4d0c8; border: 1px solid; border-color: #fff #404040 #404040 #fff; box-shadow: inset -1px -1px 0 #808080; }
.track { flex: 1; background: repeating-conic-gradient(#fff 0 25%, #d4d0c8 0 50%) 0 0 / 2px 2px; }

.status { flex: none; display: flex; height: 26px; padding-top: 1px; border-top: 1px solid #fff; border-bottom: 1px solid #fff; }
.hint { flex: 1; border-right: 1px solid #808080; }
.filter { position: relative; width: 254px; margin-left: 1px; padding: 0 0 3px 96px; border-left: 1px solid #fff; }
.filter select { appearance: none; width: 157px; height: 21px; padding: 0 16px 0 3px; background: #fff; border: 2px solid; border-color: #555 #eee #eee #555; border-radius: 0; color: #000; font: 11px "Liberation Sans", Arial, sans-serif; }
.selarrow { position: absolute; right: 2px; top: 2px; width: 17px; height: 17px; display: flex; align-items: center; justify-content: center; background: #d4d0c8; border: 1px solid; border-color: #fff #404040 #404040 #fff; pointer-events: none; }
.corner { width: 37px; margin-left: 3px; border-left: 1px solid #808080; }
</style>
